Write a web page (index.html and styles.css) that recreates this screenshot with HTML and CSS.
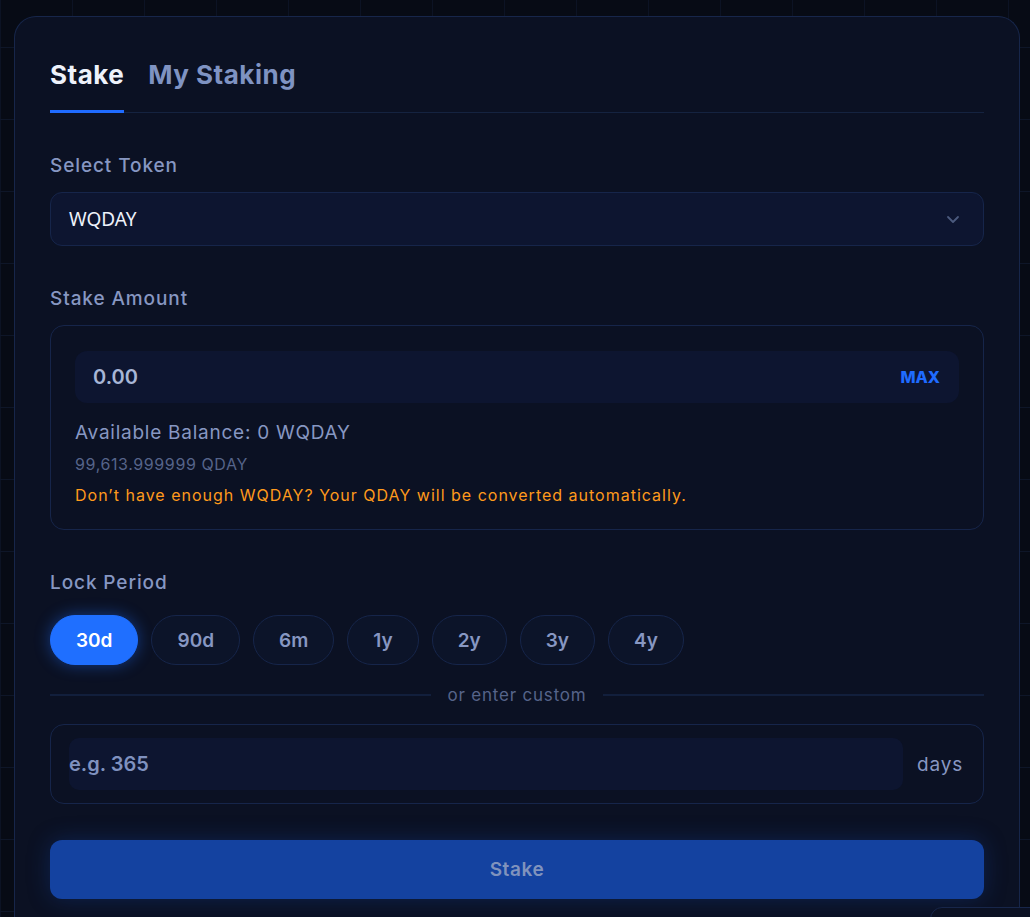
FILE: index.html
```html
<!DOCTYPE html>
<html lang="en">
<head>
    <meta charset="UTF-8">
    <meta name="viewport" content="width=device-width, initial-scale=1.0">
    <title>Stake</title>
    <link rel="stylesheet" href="styles.css">
</head>
<body>
    <div class="card">
        <div class="tabs">
            <button class="tab active">Stake</button>
            <button class="tab">My Staking</button>
        </div>

        <div class="section first">
            <div class="label">Select Token</div>
            <div class="select">
                <span class="select-value">WQDAY</span>
                <svg class="chevron" width="16" height="16" viewBox="0 0 16 16" fill="none">
                    <path d="M3 6l5 5 5-5" stroke="#4b5a7e" stroke-width="1.8" stroke-linecap="round" stroke-linejoin="round"/>
                </svg>
            </div>
        </div>

        <div class="section">
            <div class="label">Stake Amount</div>
            <div class="box amount-box">
                <div class="field">
                    <span class="amount">0.00</span>
                    <button class="max">MAX</button>
                </div>
                <div class="balance">Available Balance: 0 WQDAY</div>
                <div class="sub-balance">99,613.999999 QDAY</div>
                <div class="warn">Don’t have enough WQDAY? Your QDAY will be converted automatically.</div>
            </div>
        </div>

        <div class="section">
            <div class="label">Lock Period</div>
            <div class="pills">
                <button class="pill active">30d</button>
                <button class="pill">90d</button>
                <button class="pill">6m</button>
                <button class="pill">1y</button>
                <button class="pill">2y</button>
                <button class="pill">3y</button>
                <button class="pill">4y</button>
            </div>
            <div class="divider"><span>or enter custom</span></div>
            <div class="box custom-box">
                <div class="custom-input">e.g. 365</div>
                <span class="days">days</span>
            </div>
        </div>

        <button class="stake-btn">Stake</button>
    </div>

    <div class="corner-widget"></div>
</body>
</html>
```

FILE: styles.css
```css
body {
    margin: 0;
    height: 917px;
    overflow: hidden;
    font-family: Inter, "Noto Sans", sans-serif;
    background-color: #070b15;
    background-image:
        linear-gradient(#0e1628 1px, transparent 1px),
        linear-gradient(90deg, #0c1324 1px, transparent 1px);
    background-size: 72px 72px;
    background-position: 0 47px, 0 0;
    color: #8a9bc4;
}
button {
    font-family: inherit;
    border: none;
    background: none;
    cursor: pointer;
    padding: 0;
}
.card {
    margin: 16px 10px 0 14px;
    padding: 41px 35px 40px 35px;
    background-color: #0b1123;
    border: 1px solid #17264a;
    border-bottom: none;
    border-radius: 22px 22px 0 0;
    height: 1000px;
}
.tabs {
    display: flex;
    gap: 24px;
    border-bottom: 1px solid #152340;
}
.tab {
    font-size: 26px;
    font-weight: 700;
    line-height: 32px;
    letter-spacing: 0.5px;
    color: #7f93c2;
    padding-top: 1px;
    padding-bottom: 19px;
    border-bottom: 3px solid transparent;
    margin-bottom: -1px;
}
.tab.active {
    color: #eef2fb;
    border-bottom-color: #1f6bff;
}
.section {
    margin-top: 40px;
}
.label {
    font-size: 19px;
    line-height: 24px;
    font-weight: 500;
    letter-spacing: 0.9px;
    color: #8797c2;
    padding-top: 1px;
    margin-bottom: 14px;
}
.select {
    height: 52px;
    display: flex;
    align-items: center;
    justify-content: space-between;
    padding: 0 22px 0 18px;
    background-color: #0d1530;
    border: 1px solid #16254a;
    border-radius: 12px;
}
.select-value {
    font-family: "Noto Sans", sans-serif;
    font-size: 19px;
    color: #eef2fb;
}
.box {
    border: 1px solid #16254a;
    border-radius: 14px;
}
.amount-box {
    padding: 25px 24px 23px 24px;
}
.field {
    height: 52px;
    display: flex;
    align-items: center;
    justify-content: space-between;
    padding: 0 19px 0 18px;
    background-color: #0d1530;
    border-radius: 12px;
}
.amount {
    font-size: 20px;
    font-weight: 600;
    color: #a7b6d6;
}
.max {
    font-size: 16px;
    font-weight: 800;
    color: #1f6bff;
}
.balance {
    margin-top: 18px;
    font-size: 19px;
    line-height: 24px;
    letter-spacing: 0.75px;
    color: #8797c2;
}
.sub-balance {
    margin-top: 9px;
    font-size: 16px;
    line-height: 20px;
    letter-spacing: 0.6px;
    color: #56648a;
}
.warn {
    margin-top: 10px;
    font-size: 16px;
    line-height: 22px;
    letter-spacing: 1px;
    color: #ff9a1c;
}
.pills {
    display: flex;
    gap: 13px;
    margin-top: 20px;
}
.pill {
    height: 50px;
    padding: 0 25px;
    border-radius: 25px;
    border: 1px solid #16254a;
    background-color: #0c1429;
    color: #8797c2;
    font-size: 19px;
    font-weight: 600;
}
.pill.active {
    background-color: #1f6fff;
    border-color: #1f6fff;
    color: #ffffff;
    box-shadow: 0 0 16px rgba(31, 111, 255, 0.45);
}
.divider {
    display: flex;
    align-items: center;
    gap: 16px;
    margin-top: 20px;
    font-size: 17px;
    line-height: 20px;
    letter-spacing: 0.8px;
    color: #56648a;
}
.divider::before,
.divider::after {
    content: "";
    flex: 1;
    height: 2px;
    background-color: #121f3c;
}
.custom-box {
    margin-top: 19px;
    display: flex;
    align-items: center;
    gap: 14px;
    padding: 13px 20px 13px 18px;
}
.custom-input {
    flex: 1;
    height: 52px;
    display: flex;
    align-items: center;
    background-color: #0d1530;
    border-radius: 10px;
    font-size: 20px;
    font-weight: 600;
    color: #7f91bf;
}
.days {
    font-size: 19px;
    letter-spacing: 0.8px;
    color: #8797c2;
}
.stake-btn {
    display: block;
    width: 100%;
    height: 59px;
    margin-top: 36px;
    background-color: #1442a0;
    border-radius: 12px;
    color: #8093bd;
    font-size: 19px;
    font-weight: 600;
    letter-spacing: 0.6px;
    box-shadow: 0 0 22px rgba(20, 66, 160, 0.35);
}
.corner-widget {
    position: fixed;
    left: 930px;
    top: 907px;
    width: 200px;
    height: 80px;
    background-color: #0b1123;
    border: 1px solid #17264a;
    border-radius: 12px;
}
```
